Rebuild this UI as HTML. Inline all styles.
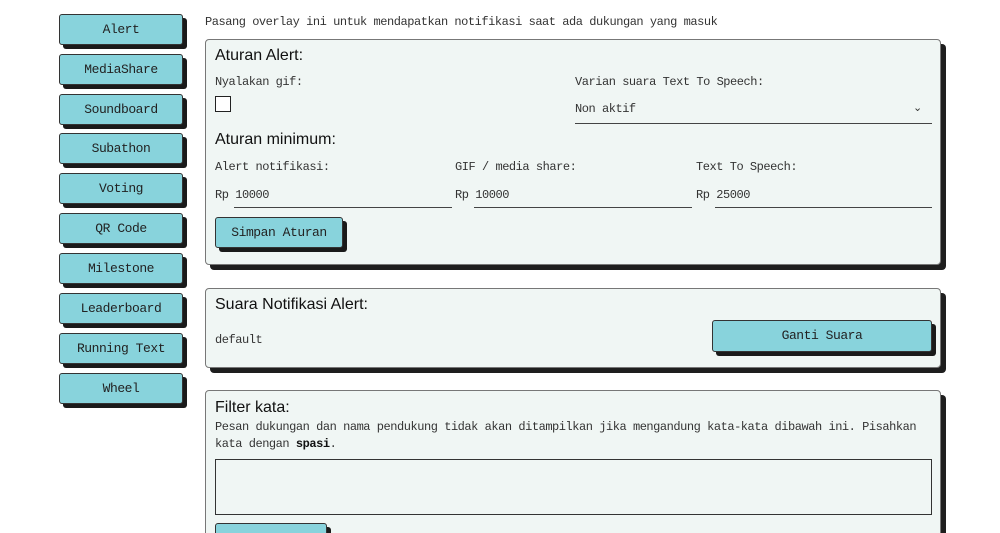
<!DOCTYPE html>
<html style="overflow:hidden;height:533px"><head><meta charset="utf-8"><style>
*{box-sizing:border-box;margin:0;padding:0}
body{width:1000px;height:533px;overflow:hidden;background:#fff;font-family:"Liberation Mono",monospace;font-size:12px;letter-spacing:-0.46px;color:#333;position:relative}
.btn{position:absolute;background:#88d3dc;border:1px solid #333;border-radius:3px;box-shadow:4px 4px 0 #1a1a1a;text-align:center;font-family:"Liberation Mono",monospace;font-size:13px;color:#222}
.side{left:59px;width:124px;height:31px;line-height:29px}
.panel{position:absolute;left:205px;width:736px;background:#f0f6f4;border:1px solid #777;border-radius:4px;box-shadow:5px 5px 0 #1e1e1e}
h3{position:absolute;font-family:"Liberation Sans",sans-serif;font-weight:normal;font-size:16px;letter-spacing:0;color:#111}
.t{position:absolute;white-space:nowrap}
.line{position:absolute;border-bottom:1px solid #444;height:1px}
</style></head><body>
<div class="btn side" style="top:14px">Alert</div>
<div class="btn side" style="top:54px">MediaShare</div>
<div class="btn side" style="top:94px">Soundboard</div>
<div class="btn side" style="top:133px">Subathon</div>
<div class="btn side" style="top:173px">Voting</div>
<div class="btn side" style="top:213px">QR Code</div>
<div class="btn side" style="top:253px">Milestone</div>
<div class="btn side" style="top:293px">Leaderboard</div>
<div class="btn side" style="top:333px">Running Text</div>
<div class="btn side" style="top:373px">Wheel</div>

<div class="t" style="left:205px;top:15px">Pasang overlay ini untuk mendapatkan notifikasi saat ada dukungan yang masuk</div>

<div class="panel" style="top:39px;height:226px">
<h3 style="left:9px;top:7px">Aturan Alert:</h3>
<div class="t" style="left:9px;top:35px">Nyalakan gif:</div>
<div style="position:absolute;left:9px;top:56px;width:16px;height:16px;border:1.5px solid #222;background:#fff"></div>
<div class="t" style="left:369px;top:35px">Varian suara Text To Speech:</div>
<div class="t" style="left:369px;top:62px">Non aktif</div>
<div class="t" style="left:707px;top:61px;font-size:11px">⌄</div>
<div class="line" style="left:369px;top:83px;width:357px"></div>
<h3 style="left:9px;top:91px">Aturan minimum:</h3>
<div class="t" style="left:9px;top:120px">Alert notifikasi:</div>
<div class="t" style="left:249px;top:120px">GIF / media share:</div>
<div class="t" style="left:490px;top:120px">Text To Speech:</div>
<div class="t" style="left:9px;top:148px">Rp 10000</div>
<div class="t" style="left:249px;top:148px">Rp 10000</div>
<div class="t" style="left:490px;top:148px">Rp 25000</div>
<div class="line" style="left:28px;top:167px;width:218px"></div>
<div class="line" style="left:268px;top:167px;width:218px"></div>
<div class="line" style="left:509px;top:167px;width:217px"></div>
<div class="btn" style="left:9px;top:177px;width:128px;height:31px;line-height:29px">Simpan Aturan</div>
</div>

<div class="panel" style="top:288px;height:80px">
<h3 style="left:9px;top:7px">Suara Notifikasi Alert:</h3>
<div class="t" style="left:9px;top:44px">default</div>
<div class="btn" style="left:506px;top:31px;width:220px;height:32px;line-height:30px">Ganti Suara</div>
</div>

<div class="panel" style="top:390px;height:160px">
<h3 style="left:9px;top:8px">Filter kata:</h3>
<div class="t" style="left:9px;top:28px;line-height:17px;white-space:normal;width:715px">Pesan dukungan dan nama pendukung tidak akan ditampilkan jika mengandung kata-kata dibawah ini. Pisahkan kata dengan <b style="color:#111">spasi</b>.</div>
<div style="position:absolute;left:9px;top:68px;width:717px;height:56px;border:1px solid #333;background:#f0f6f4"></div>
<div class="btn" style="left:9px;top:132px;width:112px;height:31px"></div>
</div>
</body></html>
